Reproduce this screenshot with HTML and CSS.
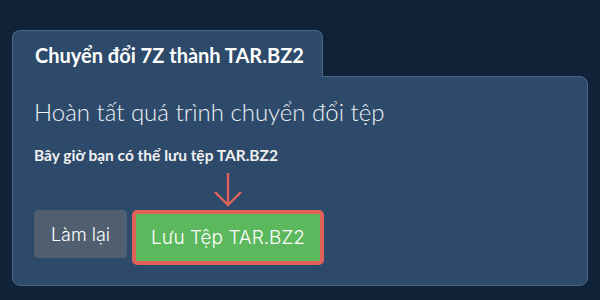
FILE: index.html
```html
<!DOCTYPE html>
<html lang="vi">
<head>
<meta charset="utf-8">
<link rel="stylesheet" href="styles.css">
</head>
<body>
<div class="card">
  <div class="tab">Chuyển đổi 7Z thành TAR.BZ2</div>
  <div class="panel">
    <h1 class="heading">Hoàn tất quá trình chuyển đổi tệp</h1>
    <p class="note">Bây giờ bạn có thể lưu tệp TAR.BZ2</p>
    <div class="actions">
      <button class="btn btn-gray">Làm lại</button>
      <div class="save-wrap">
        <svg class="arrow" width="30" height="36" viewBox="0 0 30 36">
          <path d="M15 1 V33 M2 20 L15 33 L28 20" fill="none" stroke="#e0605a" stroke-width="2.4"/>
        </svg>
        <button class="btn btn-green">Lưu Tệp TAR.BZ2</button>
      </div>
    </div>
  </div>
</div>
</body>
</html>
```

FILE: styles.css
```css
html, body {
  margin: 0;
  padding: 0;
}
body {
  background: #0f2237;
  width: 600px;
  height: 300px;
  font-family: Lato, "Noto Sans", sans-serif;
  color: #ffffff;
  overflow: hidden;
}
.card {
  padding: 30px 0 0 12px;
}
.tab {
  box-sizing: border-box;
  width: 311px;
  height: 47px;
  background: #2d4a6a;
  border: 1px solid #4a6788;
  border-bottom: none;
  border-radius: 8px 8px 0 0;
  font-weight: 700;
  font-size: 20px;
  line-height: 24px;
  padding: 12px 0 0 22px;
  position: relative;
  z-index: 1;
  margin-bottom: -1px;
}
.panel {
  box-sizing: border-box;
  width: 576px;
  height: 210px;
  background: #2d4a6a;
  border: 1px solid #4a6788;
  border-radius: 0 8px 8px 8px;
  padding: 20px 21px 0 21px;
}
.heading {
  margin: 0;
  font-weight: 300;
  font-size: 24px;
  line-height: 30px;
  color: #eef2f6;
}
.note {
  margin: 18px 0 0 0;
  font-weight: 700;
  font-size: 15.5px;
  line-height: 20px;
  color: #f0f0f0;
}
.actions {
  display: flex;
  align-items: flex-start;
  gap: 5px;
  margin-top: 45px;
}
.save-wrap {
  position: relative;
}
.arrow {
  position: absolute;
  left: 81px;
  top: -38px;
}
.btn {
  font-family: Inter, "Noto Sans", sans-serif;
  font-weight: 300;
  font-size: 18px;
  color: #ffffff;
  border: none;
  border-radius: 4px;
  height: 48px;
  margin: 0;
  cursor: pointer;
}
.btn-gray {
  background: #4f5f70;
  width: 93px;
  padding: 0;
}
.btn-green {
  box-sizing: content-box;
  background: #5cb85c;
  width: 184px;
  height: 47px;
  padding: 0;
  font-size: 19px;
  border: 4px solid #e0605a;
  border-radius: 5px;
}
```
